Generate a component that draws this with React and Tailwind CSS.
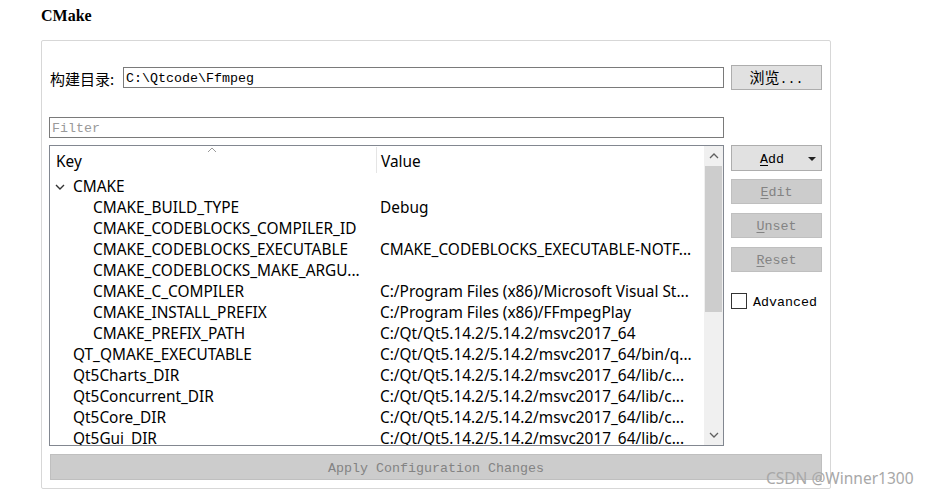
const rows = [
  { key: "CMAKE", value: "", level: 0, group: true },
  { key: "CMAKE_BUILD_TYPE", value: "Debug", level: 2 },
  { key: "CMAKE_CODEBLOCKS_COMPILER_ID", value: "", level: 2 },
  { key: "CMAKE_CODEBLOCKS_EXECUTABLE", value: "CMAKE_CODEBLOCKS_EXECUTABLE-NOTF...", level: 2 },
  { key: "CMAKE_CODEBLOCKS_MAKE_ARGU...", value: "", level: 2 },
  { key: "CMAKE_C_COMPILER", value: "C:/Program Files (x86)/Microsoft Visual St...", level: 2 },
  { key: "CMAKE_INSTALL_PREFIX", value: "C:/Program Files (x86)/FFmpegPlay", level: 2 },
  { key: "CMAKE_PREFIX_PATH", value: "C:/Qt/Qt5.14.2/5.14.2/msvc2017_64", level: 2 },
  { key: "QT_QMAKE_EXECUTABLE", value: "C:/Qt/Qt5.14.2/5.14.2/msvc2017_64/bin/q...", level: 1 },
  { key: "Qt5Charts_DIR", value: "C:/Qt/Qt5.14.2/5.14.2/msvc2017_64/lib/c...", level: 1 },
  { key: "Qt5Concurrent_DIR", value: "C:/Qt/Qt5.14.2/5.14.2/msvc2017_64/lib/c...", level: 1 },
  { key: "Qt5Core_DIR", value: "C:/Qt/Qt5.14.2/5.14.2/msvc2017_64/lib/c...", level: 1 },
  { key: "Qt5Gui_DIR", value: "C:/Qt/Qt5.14.2/5.14.2/msvc2017_64/lib/c...", level: 1 },
];

const mono = "font-['Liberation_Mono','Noto_Sans_CJK_SC',monospace] text-[13.33px]";
const sans = "font-['Noto_Sans','Noto_Sans_CJK_SC',sans-serif] text-[15.4px]";

function SideButton({ mnemonic, rest, disabled }) {
  return (
    <div
      className={`h-[25px] pt-[3px] flex items-center justify-center border ${mono} ${
        disabled
          ? "bg-[#cccccc] border-[#bfbfbf] text-[#838383]"
          : "bg-[#e1e1e1] border-[#adadad] text-black"
      }`}
    >
      <span className="underline underline-offset-2">{mnemonic}</span>
      {rest}
    </div>
  );
}

export default function App() {
  return (
    <div className="w-[929px] h-[494px] bg-white relative overflow-hidden">
      <div className="pl-[41px] pt-[4px] h-[40px] font-['Liberation_Serif',serif] font-bold text-[16px] text-black">
        CMake
      </div>

      <div className="ml-[41px] w-[790px] h-[449px] border border-[#d7d7d7] rounded-[2px] px-[7px] flex flex-col">
        <div className="mt-[24px] flex items-center h-[25px]">
          <span className="ml-[1px] w-[73px] pt-[2px] font-['Noto_Sans_CJK_SC',sans-serif] text-[15px] leading-none text-black">
            构建目录:
          </span>
          <div className={`w-[601px] h-[21px] pt-[2px] border border-[#7a7a7a] flex items-center pl-[2px] ${mono} text-black`}>
            C:\Qtcode\Ffmpeg
          </div>
          <div className="ml-[7px] w-[91px] h-[25px] pt-[1px] bg-[#e1e1e1] border border-[#adadad] flex items-center justify-center text-black">
            <span className="leading-none">
              <span className="font-['Noto_Sans_CJK_SC',sans-serif] text-[15px]">浏览</span>
              <span className={mono}>...</span>
            </span>
          </div>
        </div>

        <div className={`mt-[27px] w-[675px] h-[21px] pt-[3px] border border-[#7a7a7a] flex items-center pl-[2px] ${mono} text-[#9a9a9a]`}>
          Filter
        </div>

        <div className="mt-[7px] flex">
          <div className="w-[675px] h-[301px] border border-[#828790] flex overflow-hidden">
            <div className="flex-1 flex flex-col">
              <div className={`relative h-[30px] shrink-0 flex ${sans} text-black`}>
                <svg className="absolute left-[157px] top-[1px]" width="10" height="6" viewBox="0 0 10 6">
                  <polyline points="1,5 5,1 9,5" fill="none" stroke="#9a9a9a" strokeWidth="1" />
                </svg>
                <div className="w-[326px] flex items-center pl-[6px] pt-[1px]">Key</div>
                <div className="w-px mt-[1px] mb-[3px] bg-[#e5e5e5]" />
                <div className="flex-1 flex items-center pl-[4px] pt-[1px]">Value</div>
              </div>
              {rows.map((r) => (
                <div key={r.key} className={`h-[21px] shrink-0 flex items-center ${sans} leading-[21px] text-black whitespace-nowrap`}>
                  <div
                    className={`w-[327px] flex items-center ${
                      r.level === 0 ? "pl-[5px]" : r.level === 1 ? "pl-[23px]" : "pl-[43px]"
                    }`}
                  >
                    {r.group && (
                      <svg className="mr-[8px]" width="10" height="6" viewBox="0 0 10 6">
                        <polyline points="1,1 5,5 9,1" fill="none" stroke="#333" strokeWidth="1.4" />
                      </svg>
                    )}
                    {r.key}
                  </div>
                  <div className="flex-1 pl-[3px]">{r.value}</div>
                </div>
              ))}
            </div>
            <div className="w-[19px] bg-[#f0f0f0] flex flex-col shrink-0">
              <div className="h-[20px] flex items-center justify-center">
                <svg width="10" height="6" viewBox="0 0 10 6">
                  <polyline points="1,5 5,1 9,5" fill="none" stroke="#606060" strokeWidth="1.3" />
                </svg>
              </div>
              <div className="mx-[1px] h-[146px] bg-[#cdcdcd]" />
              <div className="flex-1" />
              <div className="h-[20px] flex items-center justify-center">
                <svg width="10" height="6" viewBox="0 0 10 6">
                  <polyline points="1,1 5,5 9,1" fill="none" stroke="#606060" strokeWidth="1.3" />
                </svg>
              </div>
            </div>
          </div>

          <div className="ml-[7px] w-[91px] flex flex-col">
            <div className={`h-[26px] pt-[3px] flex items-center bg-[#e1e1e1] border border-[#adadad] ${mono} text-black`}>
              <span className="flex-1 text-center pl-[4px]">
                <span className="underline underline-offset-2">A</span>dd
              </span>
              <svg className="mr-[5px] mb-[2px]" width="8" height="4" viewBox="0 0 8 4">
                <polygon points="0,0 8,0 4,4" fill="#222" />
              </svg>
            </div>
            <div className="mt-[8px] flex flex-col gap-[9px]">
              <SideButton mnemonic="E" rest="dit" disabled />
              <SideButton mnemonic="U" rest="nset" disabled />
              <SideButton mnemonic="R" rest="eset" disabled />
            </div>
            <div className="mt-[18px] flex items-center">
              <div className="w-[16px] h-[16px] border border-[#333] bg-white" />
              <span className={`ml-[6px] pt-[3px] ${mono} text-black`}>Advanced</span>
            </div>
          </div>
        </div>

        <div className={`mt-[8px] ml-[1px] w-[772px] h-[26px] pt-[3px] bg-[#cccccc] border border-[#bfbfbf] flex items-center justify-center ${mono} text-[#838383]`}>
          Apply Configuration Changes
        </div>
      </div>

      <div className="absolute left-[766px] top-[467px] font-['Noto_Sans',sans-serif] text-[15.5px] text-[#a8a8a8]">
        CSDN @Winner1300
      </div>
    </div>
  );
}
